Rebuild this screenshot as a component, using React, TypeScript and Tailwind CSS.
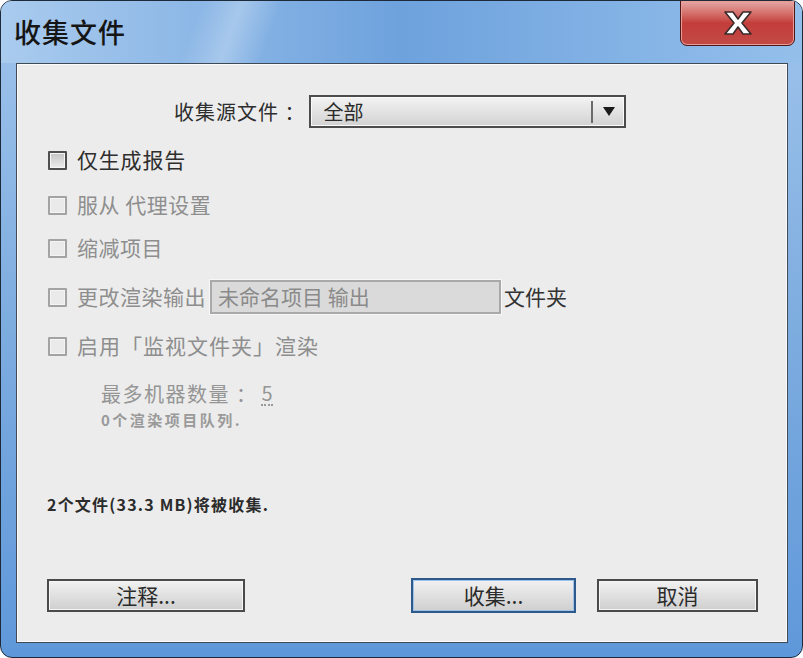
import React from "react";

const font = { fontFamily: '"Noto Sans CJK SC", "Noto Sans", sans-serif' };

function Check({ enabled = false }: { enabled?: boolean }) {
  return (
    <span
      className={
        enabled
          ? "w-[19px] h-[19px] border-2 border-[#4f4f4f] bg-linear-to-b from-[#c4c4c4] to-[#ededed] shrink-0 rounded-[1px] shadow-[inset_0_0_0_1px_#f6f6f6]"
          : "w-[19px] h-[19px] border-2 border-[#a3a3a3] bg-[#eaeaea] shrink-0 rounded-[1px] shadow-[inset_0_0_0_1px_#f4f4f4]"
      }
    />
  );
}

function Btn({ label, w, focused = false }: { label: string; w: string; focused?: boolean }) {
  return (
    <button
      className={
        (focused
          ? "border-2 border-[#2d5a8a] shadow-[inset_0_0_0_1px_#9cc2ea] "
          : "border-2 border-[#4a4a4a] shadow-[inset_0_0_0_1px_#f5f5f5] ") +
        w +
        " h-[33px] bg-linear-to-b from-[#f1f1f1] via-[#e0e0e0] to-[#cfcfcf] text-[21px] leading-none text-[#2b2b2b] flex items-center justify-center"
      }
      style={font}
    >
      {label}
    </button>
  );
}

export default function App() {
  return (
    <div className="w-[803px] h-[658px] bg-white">
      <div
        className="w-[803px] h-[658px] rounded-[12px] border border-[#1c2a3a] bg-linear-to-b from-[#9fc4ec] via-[#7dacdf] to-[#5f98da] flex flex-col overflow-hidden"
        style={font}
      >
        {/* title bar */}
        <div className="h-[62px] shrink-0 flex items-start bg-linear-to-r from-[#a9cbee] via-[#6ea2dd] to-[#94bfeb] relative">
          <div className="absolute left-[190px] top-0 w-[80px] h-[62px] bg-linear-to-r from-transparent via-[#c6dcf3]/50 to-transparent skew-x-[-20deg]" />
          <span className="relative mt-[13px] ml-[13px] text-[27px] leading-[36px] text-[#151515] font-medium tracking-[1px]">
            收集文件
          </span>
          <div className="ml-auto mr-[7px] w-[115px] h-[46px] -mt-px rounded-b-[7px] border border-[#4b1717] bg-linear-to-b from-[#e5a8a6] via-[#c33d3b] to-[#c24a44] flex items-center justify-center shadow-[inset_0_0_0_1px_#e99c98]">
            <svg width="34" height="28" viewBox="0 0 34 28">
              <path
                d="M4 3 H12 L17 10 L22 3 H30 L21 14 L30 25 H22 L17 18 L12 25 H4 L13 14 Z"
                fill="#ffffff"
                stroke="#3a2a2a"
                strokeWidth="1.6"
                strokeLinejoin="round"
              />
            </svg>
          </div>
        </div>

        {/* content */}
        <div className="ml-[15px] mr-[14px] h-[580px] shrink-0 border border-[#3f4a56] bg-[#ececec] shadow-[inset_0_0_0_1px_#fbfbfb] flex flex-col">
          {/* source select */}
          <div className="mt-[31px] h-[33px] flex items-center">
            <span className="ml-[157px] text-[20px] text-[#2e2e2e] tracking-[1px]">收集源文件 ：</span>
            <div className="ml-[4px] w-[317px] h-[33px] border-2 border-[#4c4c4c] bg-linear-to-b from-[#f3f3f3] via-[#e3e3e3] to-[#d2d2d2] shadow-[inset_0_0_0_1px_#fafafa] flex items-center">
              <span className="ml-[12px] text-[20px] text-[#2b2b2b]">全部</span>
              <span className="ml-auto w-[2px] h-[22px] bg-[#6a6a6a]" />
              <span className="w-[31px] flex justify-center">
                <svg width="12" height="9" viewBox="0 0 12 9">
                  <path d="M0 0 H12 L6 9 Z" fill="#1a1a1a" />
                </svg>
              </span>
            </div>
          </div>

          {/* options */}
          <div className="ml-[31px] mt-[16px] h-[32px] flex items-center gap-[10px]">
            <Check enabled />
            <span className="text-[21px] text-[#2e2e2e] tracking-[0.8px]">仅生成报告</span>
          </div>
          <div className="ml-[31px] mt-[13px] h-[32px] flex items-center gap-[10px]">
            <Check />
            <span className="text-[21px] text-[#8e8e8e] tracking-[0.5px]">服从 代理设置</span>
          </div>
          <div className="ml-[31px] mt-[11px] h-[32px] flex items-center gap-[10px]">
            <Check />
            <span className="text-[21px] text-[#8e8e8e] tracking-[0.5px]">缩减项目</span>
          </div>
          <div className="ml-[31px] mt-[16px] h-[34px] flex items-center gap-[10px]">
            <Check />
            <span className="text-[21px] text-[#8e8e8e] tracking-[0.5px]">更改渲染输出</span>
            <div className="-ml-[6px] w-[291px] h-[34px] border-2 border-[#a9a9a9] bg-[#dadada] shadow-[0_0_0_1px_#f7f7f7] flex items-center">
              <span className="ml-[6px] text-[21px] text-[#8a8a8a]">未命名项目 输出</span>
            </div>
            <span className="-ml-[7px] text-[21px] text-[#333333]">文件夹</span>
          </div>
          <div className="ml-[31px] mt-[16px] h-[32px] flex items-center gap-[10px]">
            <Check />
            <span className="text-[21px] text-[#8e8e8e] tracking-[1px]">启用「监视文件夹」渲染</span>
          </div>

          <div className="ml-[84px] mt-[17px] h-[30px] flex items-center">
            <span className="text-[20px] text-[#959595] tracking-[1.5px]">最多机器数量 ：</span>
            <span className="ml-[4px] text-[20px] text-[#959595] border-b-2 border-dotted border-[#9a9a9a] leading-[22px]">5</span>
          </div>
          <div className="ml-[84px] mt-[1px] h-[20px] flex items-center">
            <span className="text-[15px] text-[#9a9a9a] font-bold tracking-[2.5px]">0个渲染项目队列.</span>
          </div>

          <div className="ml-[30px] mt-[62px] h-[24px] flex items-center">
            <span className="text-[16px] text-[#2b2b2b] font-bold tracking-[1.2px]">2个文件(33.3 MB)将被收集.</span>
          </div>

          <div className="mt-[62px] flex items-center">
            <div className="ml-[30px]">
              <Btn label="注释..." w="w-[198px]" />
            </div>
            <div className="ml-[166px]">
              <Btn label="收集..." w="w-[165px] h-[35px]" focused />
            </div>
            <div className="ml-[21px]">
              <Btn label="取消" w="w-[161px]" />
            </div>
          </div>
        </div>
      </div>
    </div>
  );
}
